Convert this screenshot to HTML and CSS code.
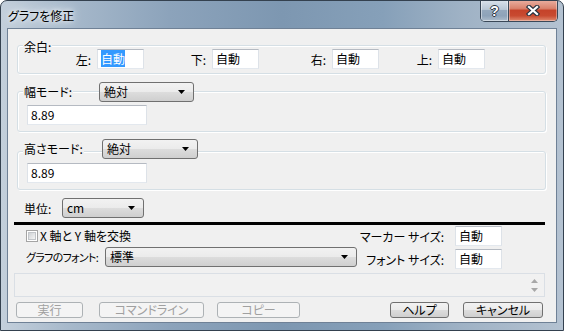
FILE: index.html
```html
<!DOCTYPE html>
<html lang="ja">
<head>
    <meta charset="UTF-8">
    <title>グラフを修正</title>
    <link rel="stylesheet" href="styles.css">
</head>
<body>
    <div class="window">
        <div class="titlebar">
            <span class="title">グラフを修正</span>
            <div class="caption">
                <div class="cap-btn help"><span>?</span></div>
                <div class="cap-btn close">
                    <svg width="14" height="11" viewBox="0 0 14 11">
                        <path d="M3 2 L11 9 M11 2 L3 9" stroke="#2a3441" stroke-width="4.5" stroke-linecap="square"/>
                        <path d="M3 2 L11 9 M11 2 L3 9" stroke="#fff" stroke-width="2.2" stroke-linecap="square"/>
                    </svg>
                </div>
            </div>
        </div>

        <div class="client">
            <!-- 余白 -->
            <div class="group margins">
                <div class="group-head">
                    <span class="group-label">余白:</span>
                </div>
                <div class="margin-row">
                    <div class="pair p1"><span>左:</span><div class="textbox auto"><span class="selected">自動</span></div></div>
                    <div class="pair p2"><span>下:</span><div class="textbox auto">自動</div></div>
                    <div class="pair p3"><span>右:</span><div class="textbox auto">自動</div></div>
                    <div class="pair p4"><span>上:</span><div class="textbox auto">自動</div></div>
                </div>
            </div>

            <!-- 幅モード -->
            <div class="group mode width-mode">
                <div class="group-head mode-head">
                    <span class="group-label">幅モード:</span>
                    <div class="combo mode-combo">
                        <span>絶対</span>
                        <svg class="arrow" width="7" height="4" viewBox="0 0 7 4"><path d="M0 0 H7 L3.5 4 Z" fill="#000"/></svg>
                    </div>
                </div>
                <div class="textbox value">8.89</div>
            </div>

            <!-- 高さモード -->
            <div class="group mode height-mode">
                <div class="group-head mode-head">
                    <span class="group-label">高さモード:</span>
                    <div class="combo mode-combo">
                        <span>絶対</span>
                        <svg class="arrow" width="7" height="4" viewBox="0 0 7 4"><path d="M0 0 H7 L3.5 4 Z" fill="#000"/></svg>
                    </div>
                </div>
                <div class="textbox value">8.89</div>
            </div>

            <div class="unit-row">
                <span>単位:</span>
                <div class="combo unit-combo">
                    <span>cm</span>
                    <svg class="arrow" width="7" height="4" viewBox="0 0 7 4"><path d="M0 0 H7 L3.5 4 Z" fill="#000"/></svg>
                </div>
            </div>

            <div class="separator"></div>

            <div class="lower">
                <div class="lower-left">
                    <div class="check-row">
                        <div class="checkbox"><div class="check-inner"></div></div>
                        <span>X 軸と Y 軸を交換</span>
                    </div>
                    <div class="font-row">
                        <span class="font-label">グラフのフォント:</span>
                        <div class="combo font-combo">
                            <span>標準</span>
                            <svg class="arrow" width="7" height="4" viewBox="0 0 7 4"><path d="M0 0 H7 L3.5 4 Z" fill="#000"/></svg>
                        </div>
                    </div>
                </div>
                <div class="lower-right">
                    <span class="size-label">マーカー サイズ:</span>
                    <div class="textbox auto">自動</div>
                    <span class="size-label">フォント サイズ:</span>
                    <div class="textbox auto">自動</div>
                </div>
            </div>

            <div class="command">
                <div class="spin">
                    <svg width="7" height="4" viewBox="0 0 7 4"><path d="M0 4 H7 L3.5 0 Z" fill="#a7a7a7"/></svg>
                    <svg width="7" height="4" viewBox="0 0 7 4"><path d="M0 0 H7 L3.5 4 Z" fill="#a7a7a7"/></svg>
                </div>
            </div>

            <div class="buttons">
                <div class="btn disabled b-run">実行</div>
                <div class="btn disabled b-cmd">コマンドライン</div>
                <div class="btn disabled b-copy">コピー</div>
                <div class="btn b-help">ヘルプ</div>
                <div class="btn b-cancel">キャンセル</div>
            </div>
        </div>
    </div>
</body>
</html>
```

FILE: styles.css
```css
body {
    margin: 0;
    font-family: "Noto Sans CJK JP", sans-serif;
    font-size: 12px;
    font-feature-settings: "palt";
    color: #000;
    white-space: nowrap;
}
.window {
    width: 564px;
    height: 331px;
    box-sizing: border-box;
    border: 1px solid #34414f;
    border-radius: 7px 7px 0 0;
    background: linear-gradient(90deg, #c3cfdb 0%, #a7b9cb 12%, #8ca3bb 30%, #7d97b1 50%, #86a0b9 68%, #9fb2c5 82%, #b4c2d1 100%);
    display: flex;
    flex-direction: column;
    overflow: hidden;
}

/* title bar */
.titlebar {
    height: 27px;
    flex: none;
    display: flex;
}
.title {
    margin: 8px 0 0 7px;
    line-height: 14px;
    text-shadow: 0 0 4px #fff, 0 0 8px #e9eff5, 0 0 12px #dfe7ef;
}
.caption {
    margin: -1px 5px 0 auto;
    height: 21px;
    display: flex;
    border: 1px solid #3a4858;
    border-top: none;
    border-radius: 0 0 5px 5px;
    overflow: hidden;
}
.cap-btn {
    display: flex;
    align-items: center;
    justify-content: center;
}
.help {
    width: 27px;
    background: linear-gradient(#dbe3ec 0%, #b9c7d5 45%, #94a8bd 50%, #8ea3b9 75%, #aebdcc 100%);
    box-shadow: inset 0 0 0 1px rgba(255, 255, 255, 0.45);
}
.help span {
    font-family: "Liberation Sans", sans-serif;
    font-weight: bold;
    font-size: 14px;
    line-height: 14px;
    color: #fff;
    text-shadow: 1px 0 0 #2a3441, -1px 0 0 #2a3441, 0 1px 0 #2a3441, 0 -1px 0 #2a3441;
}
.close {
    width: 48px;
    border-left: 1px solid #3a4858;
    background: linear-gradient(#eab0a2 0%, #d9826d 40%, #c5432a 50%, #c84a30 75%, #e08a6f 100%);
    box-shadow: inset 0 0 0 1px rgba(255, 255, 255, 0.35);
}

/* client area */
.client {
    flex: 1;
    margin: 0 6px 7px;
    border: 1px solid #6f8196;
    background: #f0f0f0;
    padding: 0 11px 0 6px;
    display: flex;
    flex-direction: column;
}
.group {
    border: 1px solid #d5dfe5;
    border-radius: 3px;
    box-shadow: inset 1px 1px 0 #fff, 1px 1px 0 #fff;
    margin: 0 -1px 0 3px;
}
.group-head {
    padding-left: 5px;
    display: flex;
    align-items: center;
}
.group-label {
    background: #f0f0f0;
    padding: 0 1px;
    line-height: 14px;
}
.margins {
    margin-top: 16px;
    padding-bottom: 4px;
}
.margins .group-head {
    height: 14px;
    margin: -6px 0 -5px;
}
.margin-row {
    display: flex;
    height: 20px;
}
.pair {
    display: flex;
    justify-content: flex-end;
    align-items: center;
    gap: 6px;
}
.p1 { width: 126px; }
.p2 { width: 115px; }
.p3 { width: 120px; }
.p4 { width: 106px; }

.textbox {
    box-sizing: border-box;
    height: 20px;
    background: #fff;
    border: 1px solid;
    border-color: #b5bac2 #dde2e8 #e3e8ee #dde2e8;
    padding: 0 3px;
    line-height: 18px;
}
.textbox.auto {
    width: 47px;
}
.selected {
    background: #3399ff;
    color: #fff;
}
.mode {
    padding-bottom: 6px;
}
.mode-head {
    display: grid;
    height: 20px;
}
.mode-head .group-label {
    justify-self: start;
}
.width-mode {
    margin-top: 17px;
}
.width-mode .mode-head {
    margin-top: -10px;
    grid-template-columns: 76px 95px;
}
.height-mode {
    margin-top: 19px;
}
.height-mode .mode-head {
    margin-top: -13px;
    grid-template-columns: 79px 96px;
}
.value {
    width: 120px;
    margin: 3px 0 0 9px;
}
.height-mode .value {
    margin-top: 4px;
}

/* combo box */
.combo {
    box-sizing: border-box;
    height: 20px;
    border: 1px solid #707070;
    border-radius: 3px;
    background: linear-gradient(#f2f2f2 0%, #ebebeb 50%, #dddddd 50%, #cfcfcf 100%);
    display: flex;
    align-items: center;
    justify-content: space-between;
    padding: 0 8px 0 4px;
    line-height: 18px;
}
.arrow {
    flex: none;
}

.unit-row {
    margin-top: 8px;
    padding-left: 10px;
    height: 20px;
    display: grid;
    grid-template-columns: 38px 82px;
    align-items: center;
}
.separator {
    margin-top: 4px;
    height: 3px;
    background: #000;
}

.lower {
    display: flex;
    height: 45px;
}
.lower-left {
    padding: 4px 0 0 12px;
}
.check-row {
    height: 13px;
    display: flex;
    align-items: center;
    gap: 2px;
    line-height: 13px;
}
.checkbox {
    box-sizing: border-box;
    width: 12px;
    height: 12px;
    border: 1px solid #a4a4a4;
    background: #fff;
    padding: 1px;
}
.check-inner {
    width: 8px;
    height: 8px;
    border: 1px solid #c2c5c9;
    box-sizing: border-box;
    background: linear-gradient(135deg, #cfd2d5, #f5f5f5);
}
.font-row {
    margin-top: 5px;
    display: grid;
    grid-template-columns: 79px 252px;
    align-items: center;
}
.font-label {
    font-size: 11px;
    letter-spacing: -0.7px;
}
.lower-right {
    margin: 1px 43px 0 auto;
    display: grid;
    grid-template-columns: auto 47px;
    grid-auto-rows: 20px;
    column-gap: 11px;
    row-gap: 3px;
    align-items: center;
    justify-items: end;
}

.command {
    margin-top: 3px;
    height: 24px;
    box-sizing: border-box;
    border: 1px solid #dadfe5;
    background: #f1f1f1;
    display: flex;
    justify-content: flex-end;
    padding-right: 6px;
}
.spin {
    display: flex;
    flex-direction: column;
    justify-content: center;
    gap: 5px;
}

.buttons {
    margin-top: 5px;
    display: flex;
    padding: 0 2px;
}
.btn {
    box-sizing: border-box;
    height: 16px;
    line-height: 14px;
    text-align: center;
    border: 1px solid #707070;
    border-radius: 3px;
    background: linear-gradient(#f2f2f2 0%, #ebebeb 50%, #dddddd 50%, #cfcfcf 100%);
}
.btn.disabled {
    border-color: #adb2b5;
    background: #f4f4f4;
    color: #a0a0a0;
}
.b-run { width: 67px; }
.b-cmd { width: 105px; margin-left: 16px; }
.b-copy { width: 83px; margin-left: 13px; }
.b-help { width: 59px; margin-left: auto; }
.b-cancel { width: 80px; margin-left: 14px; }
```
